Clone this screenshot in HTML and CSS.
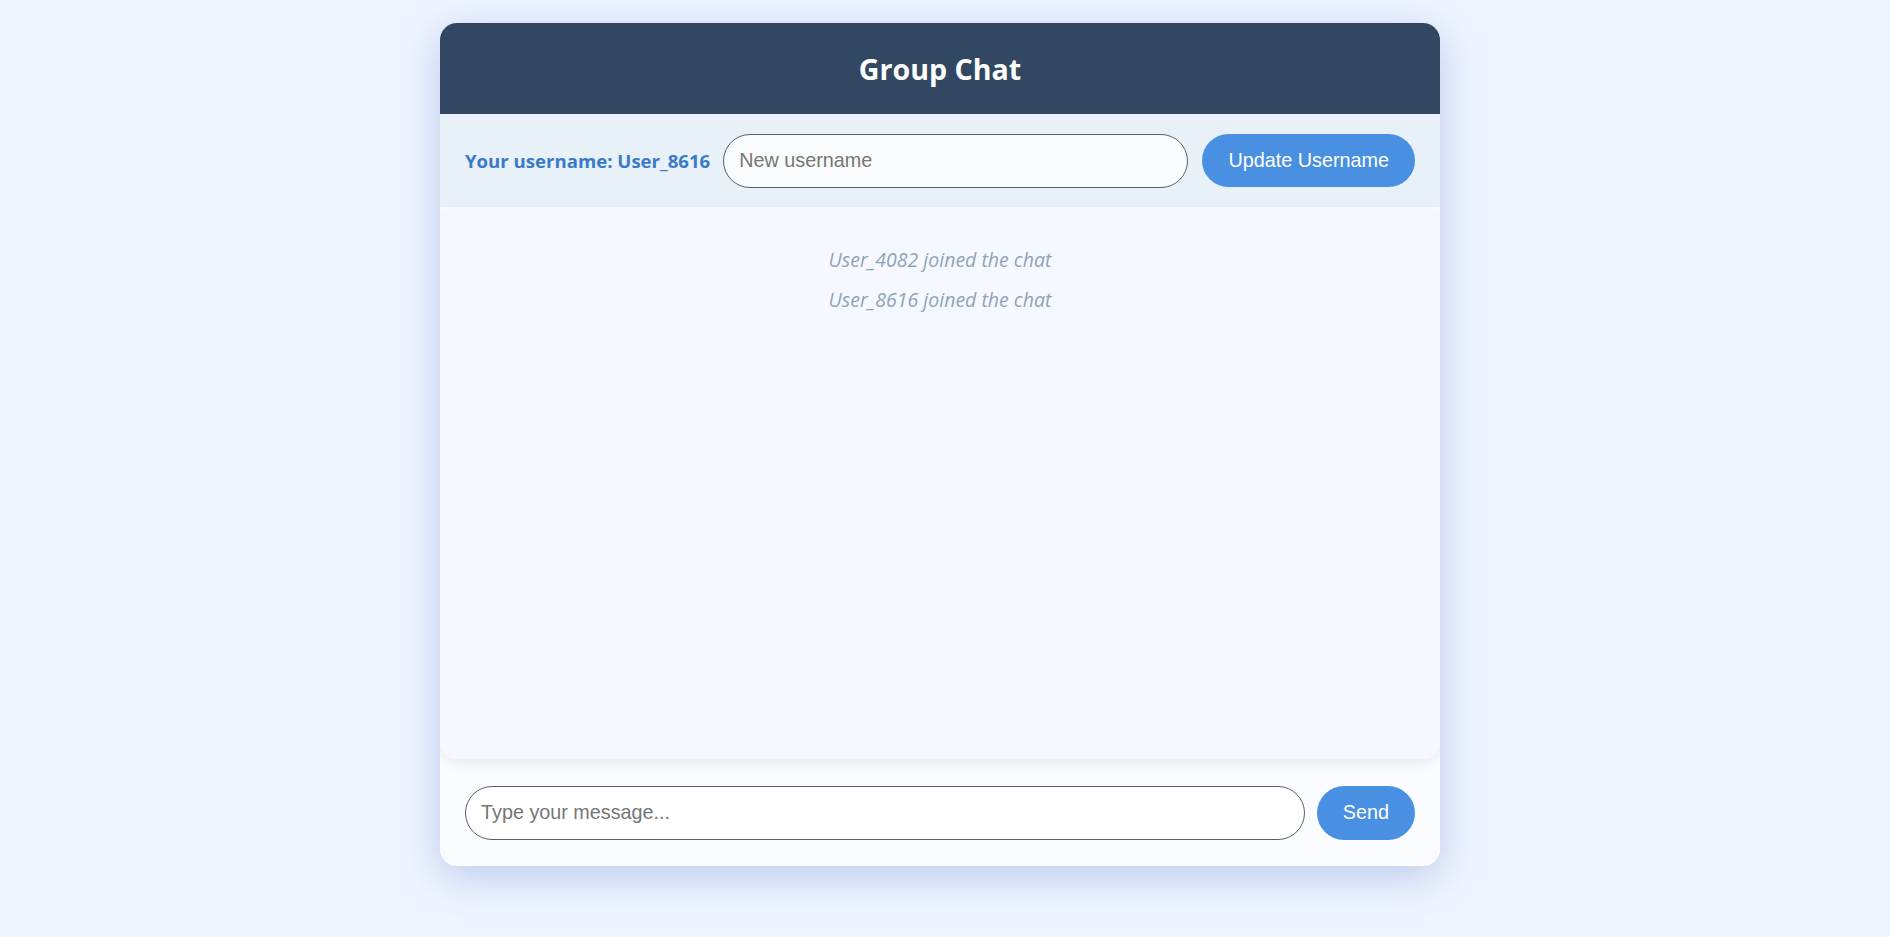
FILE: index.html
```html
<!DOCTYPE html>
<html lang="en">
<head>
<meta charset="utf-8">
<title>Group Chat</title>
<link rel="stylesheet" href="styles.css">
</head>
<body>
<div class="chat-card">
  <header class="chat-header">
    <h1 class="chat-title">Group Chat</h1>
  </header>
  <div class="user-bar">
    <span class="user-label">Your username: User_8616</span>
    <input class="user-input" type="text" placeholder="New username">
    <button class="btn btn-update">Update Username</button>
  </div>
  <div class="messages">
    <div class="sys-msg">User_4082 joined the chat</div>
    <div class="sys-msg">User_8616 joined the chat</div>
  </div>
  <div class="composer">
    <input class="msg-input" type="text" placeholder="Type your message...">
    <button class="btn btn-send">Send</button>
  </div>
</div>
</body>
</html>
```
FILE: styles.css
```css
html, body {
  margin: 0;
  padding: 0;
}
body {
  background: #eef5ff;
  font-family: "Open Sans", "Noto Sans", sans-serif;
  display: flex;
  justify-content: center;
  padding: 23px 10px 0 0;
  min-height: 937px;
  box-sizing: border-box;
}
.chat-card {
  width: 1000px;
  height: 843px;
  display: flex;
  flex-direction: column;
  border-radius: 17px;
  overflow: hidden;
  background: #fafcff;
  box-shadow: 0 10px 40px rgba(70, 95, 190, 0.3);
}
.chat-header {
  height: 91px;
  background: #324862;
  display: flex;
  align-items: center;
  justify-content: center;
  flex: none;
}
.chat-title {
  margin: 0;
  color: #ffffff;
  font-size: 28.6px;
  font-weight: 700;
}
.user-bar {
  flex: none;
  height: 93px;
  box-sizing: border-box;
  background: #e8f0f8;
  display: flex;
  align-items: center;
  padding: 0 25px 0 25px;
  gap: 13px;
}
.user-label {
  color: #3a7bc8;
  font-weight: 700;
  font-size: 18.6px;
  white-space: nowrap;
}
.user-input, .msg-input {
  flex: 1;
  height: 54px;
  box-sizing: border-box;
  border: 1px solid #56606c;
  border-radius: 27px;
  padding: 0 15px;
  font-family: "Liberation Sans", Arial, sans-serif;
  font-size: 19.8px;
  color: #333;
  outline: none;
  min-width: 0;
}
.user-input {
  background: #f9fbfd;
}
.msg-input {
  background: #ffffff;
}
.user-input::placeholder, .msg-input::placeholder {
  color: #767676;
}
.btn {
  flex: none;
  height: 53px;
  border: none;
  border-radius: 27px;
  background: #4a90e2;
  color: #ffffff;
  font-family: "Liberation Sans", Arial, sans-serif;
  font-size: 19.8px;
  padding: 0 26px;
}
.btn-update {
  margin-left: 1px;
}
.btn-send {
  height: 54px;
}
.messages {
  flex: 1;
  background: #f5f9ff;
  border-radius: 16px;
  box-shadow: 0 4px 14px rgba(0, 0, 0, 0.08);
  padding: 40px 20px;
  display: flex;
  flex-direction: column;
  align-items: center;
  gap: 14px;
  position: relative;
  z-index: 1;
}
.sys-msg {
  color: #8fa3b8;
  font-style: italic;
  font-size: 19.5px;
  line-height: 26px;
}
.composer {
  flex: none;
  height: 107px;
  box-sizing: border-box;
  display: flex;
  align-items: center;
  padding: 0 25px;
  gap: 12px;
  background: #fafcff;
}
```
